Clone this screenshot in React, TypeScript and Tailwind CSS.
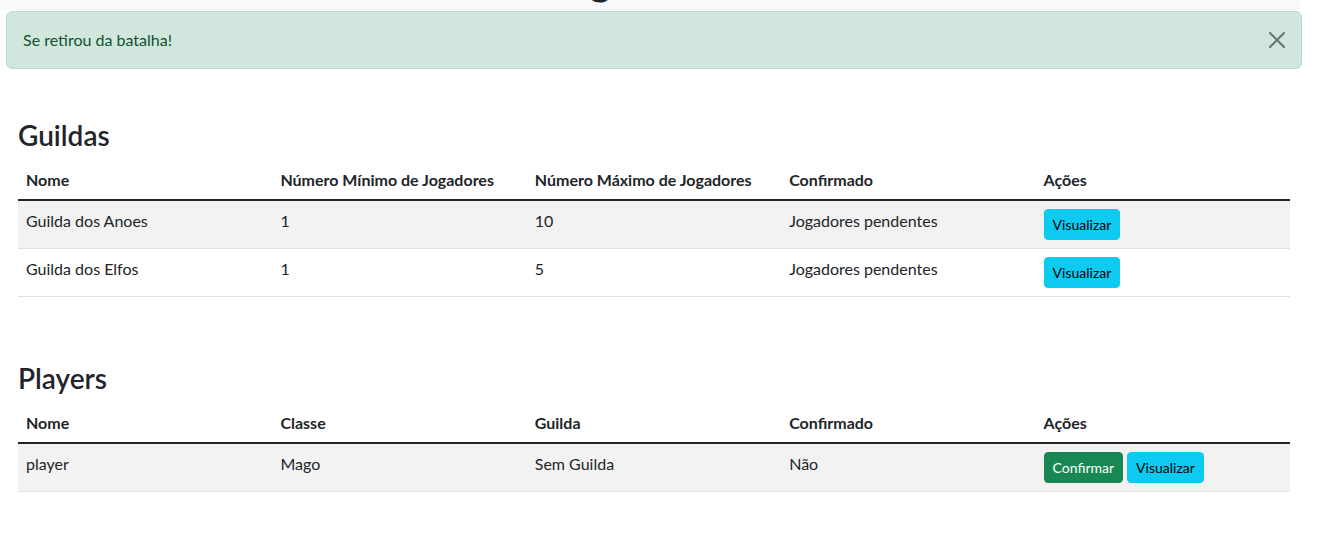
const guildas = [
  { nome: "Guilda dos Anoes", min: "1", max: "10", confirmado: "Jogadores pendentes" },
  { nome: "Guilda dos Elfos", min: "1", max: "5", confirmado: "Jogadores pendentes" },
];

const players = [{ nome: "player", classe: "Mago", guilda: "Sem Guilda", confirmado: "Não" }];

function Th({ children }: { children: React.ReactNode }) {
  return (
    <th className="border-b-2 border-[#212529] px-2 pt-2 pb-[7px] text-left align-bottom font-bold leading-6">
      {children}
    </th>
  );
}

function Td({ children }: { children: React.ReactNode }) {
  return <td className="border-b border-[#dee2e6] px-2 py-2 align-top leading-6">{children}</td>;
}

function VisualizarBtn() {
  return (
    <button className="h-[31px] rounded-[4px] border border-[#0dcaf0] bg-[#0dcaf0] px-2 text-[14px] leading-[21px] text-black">
      Visualizar
    </button>
  );
}

export default function App() {
  return (
    <div
      className="relative min-h-[553px] bg-white text-[16px] text-[#212529]"
      style={{ fontFamily: "Lato, 'Open Sans', sans-serif" }}
    >
      {/* cabeçalho rolado para cima */}
      <div className="h-[10px] w-[1300px] overflow-hidden bg-[#f8f9fa]">
        <h1 className="ml-[506px] mt-[-40px] text-[40px] font-bold leading-[40px] text-[#212529]">Listagem</h1>
      </div>

      {/* Alerta */}
      <div className="absolute left-[6px] top-[11px] flex h-[58px] w-[1296px] items-center justify-between rounded-[6px] border border-[#badbcc] bg-[#d1e7dd] pl-4 text-[#0f5132]">
        <span className="leading-6">Se retirou da batalha!</span>
        <button className="flex h-[56px] w-[48px] items-center justify-center opacity-50" aria-label="Close">
          <svg width="16" height="16" viewBox="0 0 16 16" fill="#000">
            <path d="M.293.293a1 1 0 011.414 0L8 6.586 14.293.293a1 1 0 111.414 1.414L9.414 8l6.293 6.293a1 1 0 01-1.414 1.414L8 9.414l-6.293 6.293a1 1 0 01-1.414-1.414L6.586 8 .293 1.707a1 1 0 010-1.414z" />
          </svg>
        </button>
      </div>

      <div className="px-[18px]">
        {/* Guildas */}
        <h2 className="mb-[8px] mt-[108px] text-[28px] font-semibold leading-[34px]">Guildas</h2>
        <table className="w-[1272px] table-fixed border-separate border-spacing-0">
          <thead>
            <tr>
              <Th>Nome</Th>
              <Th>Número Mínimo de Jogadores</Th>
              <Th>Número Máximo de Jogadores</Th>
              <Th>Confirmado</Th>
              <Th>Ações</Th>
            </tr>
          </thead>
          <tbody>
            {guildas.map((g, i) => (
              <tr key={g.nome} className={i % 2 === 0 ? "bg-[#f2f2f2]" : ""}>
                <Td>{g.nome}</Td>
                <Td>{g.min}</Td>
                <Td>{g.max}</Td>
                <Td>{g.confirmado}</Td>
                <Td>
                  <VisualizarBtn />
                </Td>
              </tr>
            ))}
          </tbody>
        </table>

        {/* Players */}
        <h2 className="mb-[8px] mt-[64px] text-[28px] font-semibold leading-[34px]">Players</h2>
        <table className="w-[1272px] table-fixed border-separate border-spacing-0">
          <thead>
            <tr>
              <Th>Nome</Th>
              <Th>Classe</Th>
              <Th>Guilda</Th>
              <Th>Confirmado</Th>
              <Th>Ações</Th>
            </tr>
          </thead>
          <tbody>
            {players.map((p) => (
              <tr key={p.nome} className="bg-[#f2f2f2]">
                <Td>{p.nome}</Td>
                <Td>{p.classe}</Td>
                <Td>{p.guilda}</Td>
                <Td>{p.confirmado}</Td>
                <Td>
                  <div className="flex gap-1">
                    <button className="h-[31px] rounded-[4px] border border-[#198754] bg-[#198754] px-2 text-[14px] leading-[21px] text-white">
                      Confirmar
                    </button>
                    <VisualizarBtn />
                  </div>
                </Td>
              </tr>
            ))}
          </tbody>
        </table>
      </div>
    </div>
  );
}
